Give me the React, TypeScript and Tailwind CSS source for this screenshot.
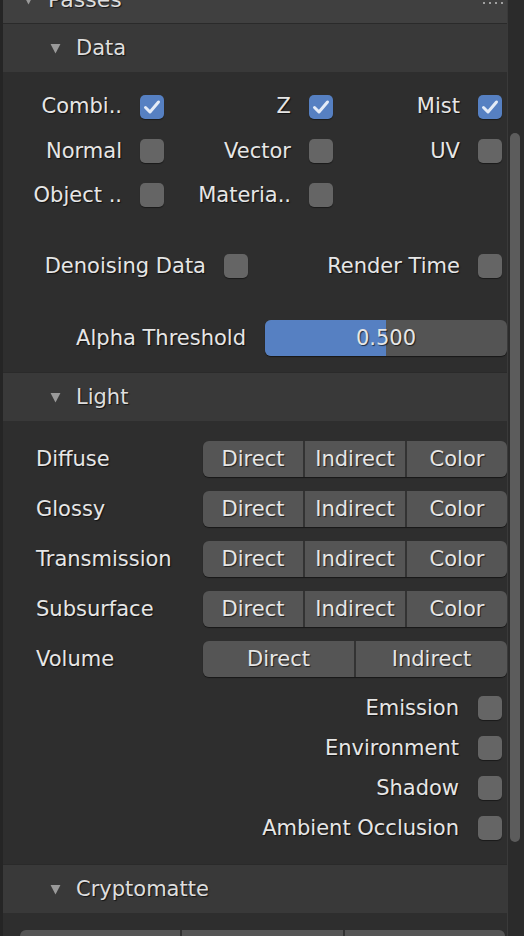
import React from 'react';

const shadow = '[text-shadow:1px_1px_1px_rgba(0,0,0,0.65)]';

function Check({ on }: { on?: boolean }) {
  return (
    <span
      className={`flex h-6 w-6 shrink-0 items-center justify-center rounded-[5px] shadow-[0_1px_1px_rgba(0,0,0,0.45)] ${
        on ? 'bg-[#5680c2]' : 'bg-[#656565]'
      }`}
    >
      {on && (
        <svg viewBox="0 0 24 24" className="h-6 w-6">
          <path
            d="M5.5 12.5 L10 17 L18.5 7"
            fill="none"
            stroke="#e4ebf7"
            strokeWidth="3"
            strokeLinecap="round"
            strokeLinejoin="round"
          />
        </svg>
      )}
    </span>
  );
}

function Triangle() {
  return (
    <svg viewBox="0 0 10 10" className="h-[11px] w-[11px]">
      <path d="M0.5 1 L9.5 1 L5 9.5 Z" fill="#9a9a9a" />
    </svg>
  );
}

function SubHeader({ title }: { title: string }) {
  return (
    <div className="flex h-[49px] shrink-0 items-center border-t border-[#2a2a2a] bg-[#393939]">
      <span className="ml-[47px] mr-[15px] flex items-center">
        <Triangle />
      </span>
      <span className={`text-[#dedede] ${shadow}`}>{title}</span>
    </div>
  );
}

function Labeled({ label, on, width }: { label: string; on?: boolean; width: number }) {
  return (
    <div className="flex shrink-0 items-center justify-end gap-[18px]" style={{ width }}>
      <span className={`whitespace-nowrap text-[#e6e6e6] ${shadow}`}>{label}</span>
      <Check on={on} />
    </div>
  );
}

function Segmented({ items }: { items: string[] }) {
  return (
    <div className="flex h-9 flex-1 gap-[2px] overflow-hidden rounded-[6px] bg-[#333333] shadow-[0_1px_1px_rgba(0,0,0,0.5)]">
      {items.map((it) => (
        <div
          key={it}
          className={`flex flex-1 items-center justify-center bg-[#555555] text-[#e6e6e6] ${shadow}`}
        >
          {it}
        </div>
      ))}
    </div>
  );
}

const lightRows: { label: string; items: string[] }[] = [
  { label: 'Diffuse', items: ['Direct', 'Indirect', 'Color'] },
  { label: 'Glossy', items: ['Direct', 'Indirect', 'Color'] },
  { label: 'Transmission', items: ['Direct', 'Indirect', 'Color'] },
  { label: 'Subsurface', items: ['Direct', 'Indirect', 'Color'] },
  { label: 'Volume', items: ['Direct', 'Indirect'] },
];

const extraPasses = ['Emission', 'Environment', 'Shadow', 'Ambient Occlusion'];

export default function App() {
  return (
    <div
      className="flex h-[936px] w-[524px] overflow-hidden bg-[#2e2e2e] text-[21px] leading-none"
      style={{ fontFamily: '"DejaVu Sans", "Noto Sans", sans-serif' }}
    >
      {/* left editor edge */}
      <div className="w-[3px] shrink-0 bg-[#252525]" />

      <div className="flex w-[504px] shrink-0 flex-col">
        {/* Passes header (scrolled partly off) */}
        <div className="-mt-[24px] flex h-[47px] shrink-0 items-center bg-[#404040]">
          <span className="ml-[20px] mr-[14px] flex items-center">
            <Triangle />
          </span>
          <span className={`text-[22px] text-[#dedede] ${shadow}`}>Passes</span>
          <div className="ml-auto mr-[4px] flex flex-col gap-[4px]">
            {[0, 1].map((r) => (
              <div key={r} className="flex gap-[4px]">
                {[0, 1, 2, 3].map((d) => (
                  <span key={d} className="h-[2px] w-[2px] bg-[#a0a0a0]" />
                ))}
              </div>
            ))}
          </div>
        </div>

        {/* Data */}
        <SubHeader title="Data" />
        <div className="flex h-[300px] shrink-0 flex-col pt-[12px] pr-[5px]">
          <div className="flex h-[45px] shrink-0 items-center justify-end">
            <Labeled label="Combi.." on width={161} />
            <Labeled label="Z" on width={169} />
            <Labeled label="Mist" on width={169} />
          </div>
          <div className="flex h-[44px] shrink-0 items-center justify-end">
            <Labeled label="Normal" width={161} />
            <Labeled label="Vector" width={169} />
            <Labeled label="UV" width={169} />
          </div>
          <div className="flex h-[44px] shrink-0 items-center justify-end">
            <Labeled label="Object .." width={161} />
            <Labeled label="Materia.." width={169} />
            <div className="w-[169px] shrink-0" />
          </div>
          <div className="mt-[27px] flex h-[44px] shrink-0 items-center justify-end">
            <Labeled label="Denoising Data" width={245} />
            <Labeled label="Render Time" width={254} />
          </div>
          <div className="-mr-[5px] mt-[32px] flex h-9 shrink-0 items-center gap-[19px]">
            <span className={`w-[243px] shrink-0 text-right text-[#e6e6e6] ${shadow}`}>
              Alpha Threshold
            </span>
            <div className="relative flex h-9 flex-1 items-center justify-center overflow-hidden rounded-[6px] bg-[#545454] shadow-[0_1px_1px_rgba(0,0,0,0.5)]">
              <div className="absolute inset-y-0 left-0 bg-[#5680c2]" style={{ width: '50%' }} />
              <span className={`relative text-[#e6e6e6] ${shadow}`}>0.500</span>
            </div>
          </div>
        </div>

        {/* Light */}
        <SubHeader title="Light" />
        <div className="flex h-[443px] shrink-0 flex-col pt-[20px]">
          <div className="flex flex-col gap-[14px]">
            {lightRows.map((row) => (
              <div key={row.label} className="flex h-9 shrink-0 items-center">
                <span className={`ml-[33px] w-[167px] shrink-0 text-[#e6e6e6] ${shadow}`}>
                  {row.label}
                </span>
                <Segmented items={row.items} />
              </div>
            ))}
          </div>
          <div className="mt-[11px] flex flex-col pr-[5px]">
            {extraPasses.map((p) => (
              <div key={p} className="flex h-[40px] shrink-0 items-center justify-end gap-[19px]">
                <span className={`text-[#e6e6e6] ${shadow}`}>{p}</span>
                <Check />
              </div>
            ))}
          </div>
        </div>

        {/* Cryptomatte */}
        <SubHeader title="Cryptomatte" />
        <div className="flex shrink-0 pl-[17px] pr-[2px] pt-[17px]">
          <Segmented items={['Object', 'Material', 'Asset']} />
        </div>
      </div>

      {/* scroll region */}
      <div className="relative flex-1 border-l border-[#3a3a3a] bg-[#2b2b2b]">
        <div className="absolute left-[2px] top-[133px] h-[709px] w-[10px] rounded-full bg-[#5c5c5c]" />
      </div>
    </div>
  );
}
